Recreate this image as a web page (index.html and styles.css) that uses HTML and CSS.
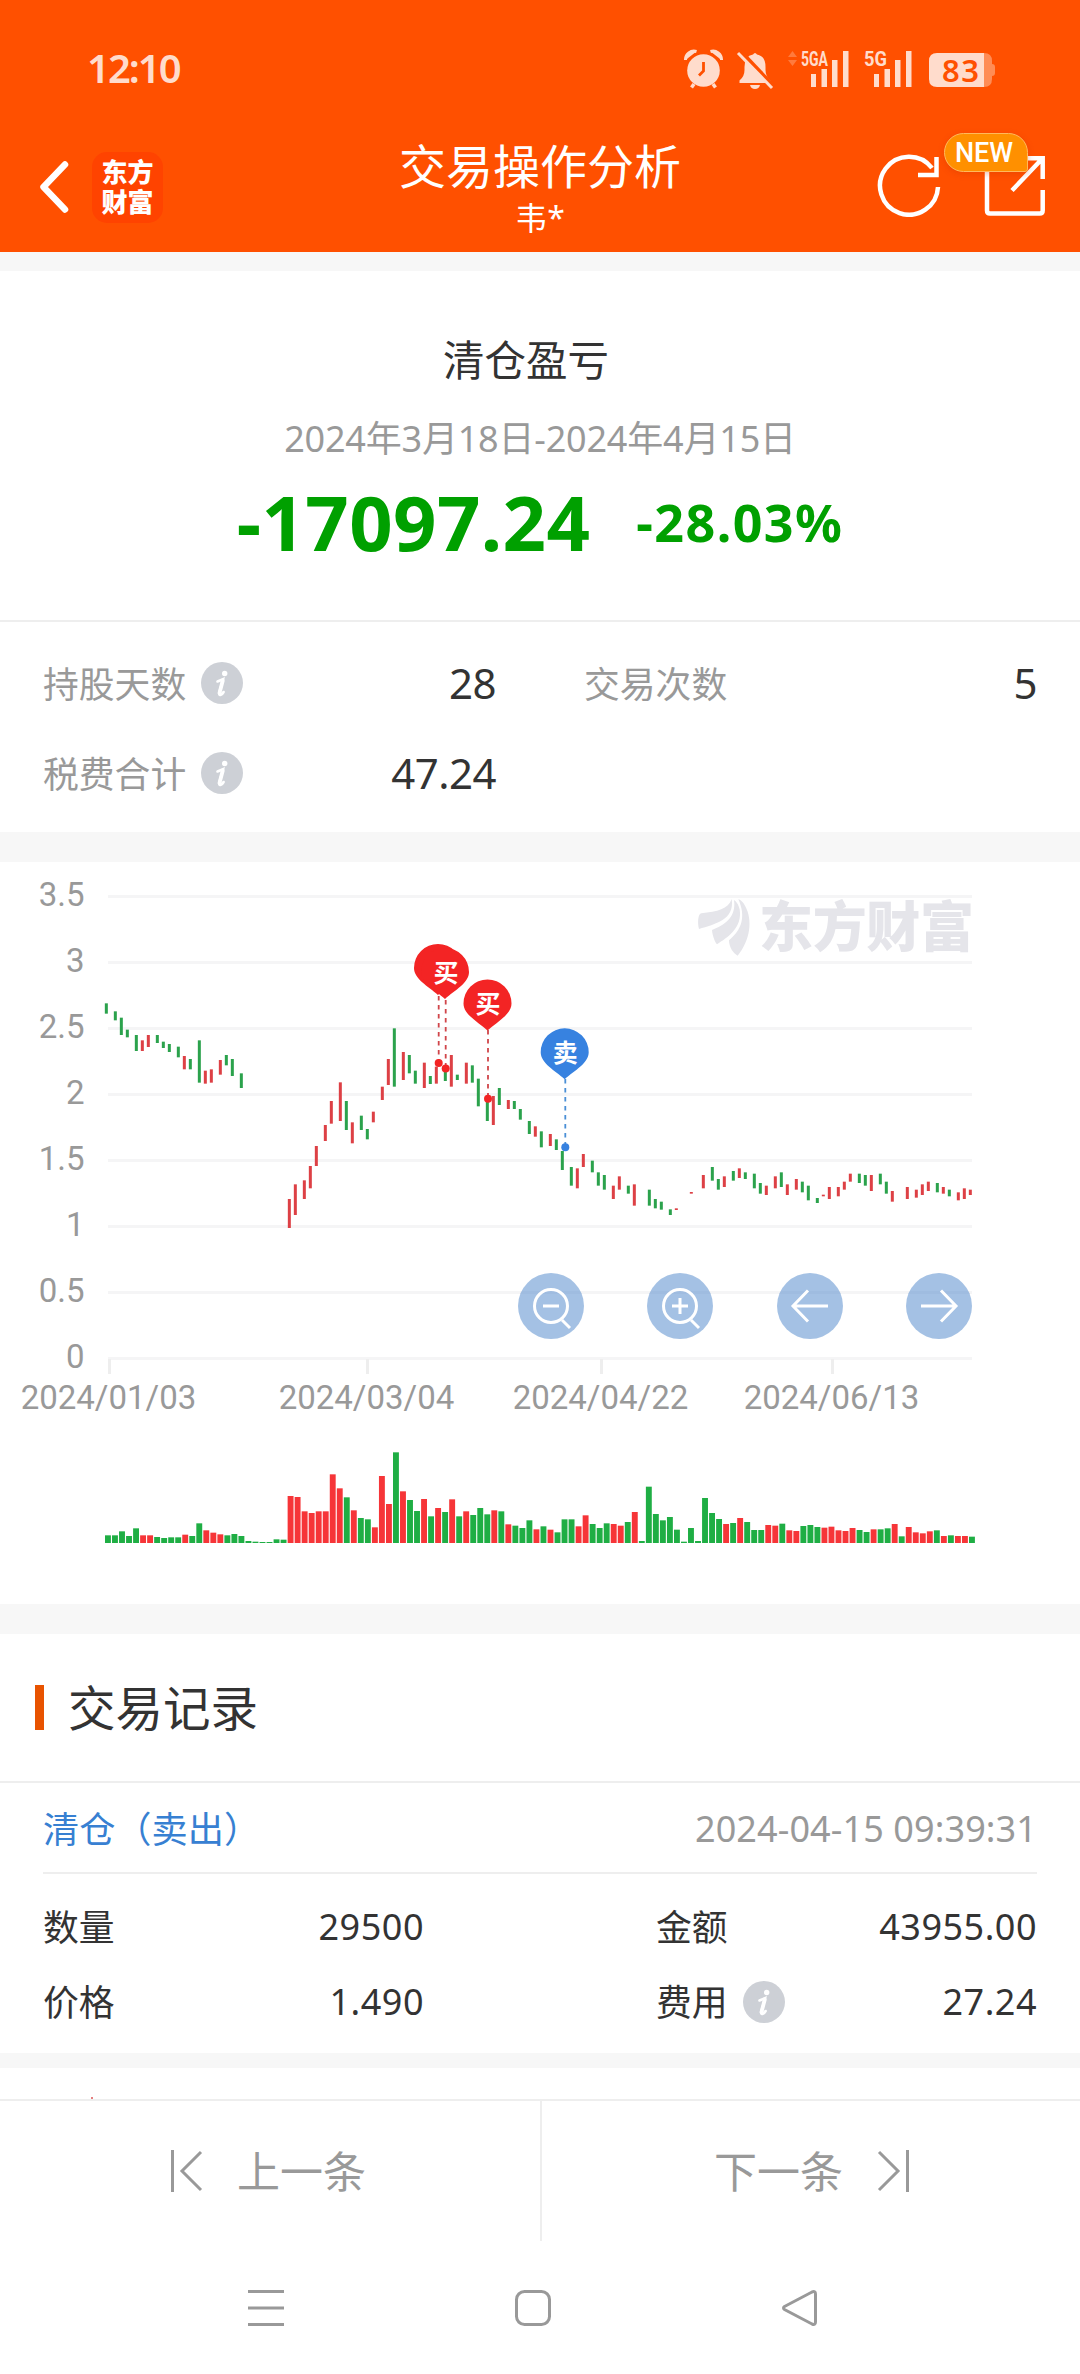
FILE: index.html
```html
<!DOCTYPE html>
<html lang="zh-CN">
<head>
  <meta charset="UTF-8" />
  <meta name="viewport" content="width=device-width, initial-scale=1.0"/>
  <title>交易操作分析</title>
  <link rel="stylesheet" href="styles.css">
</head>
<body>
  <!-- Shared icons -->
  <svg class="sprite" width="0" height="0">
    <symbol id="icon-info" viewBox="0 0 42 42">
      <circle cx="21" cy="21" r="21" fill="#cdd0d6"/>
      <circle cx="23.700" cy="11.500" r="2.700" fill="#fff"/>
      <path d="M16.500 19.500q2.500-1 5.500-2.200L18.300 30.500q-.6 3 1.500 2.200q1.700-.7 2.800-2.700" fill="none" stroke="#fff" stroke-width="2.600" stroke-linecap="round"/>
      <path d="M21.800 18.500L18.500 31" stroke="#fff" stroke-width="3.800" stroke-linecap="round"/>
    </symbol>
    <symbol id="pin" viewBox="-24 -24 48 52" overflow="visible">
      <path d="M-24 0A24 24 0 1 1 24 0C24 11 10 18 0 27C-10 18-24 11-24 0Z"/>
    </symbol>
  </svg>

  <header class="header">
    <div class="status-bar">
      <span class="time">12:10</span>
      <svg class="status-icons" width="312" height="46" viewBox="684 46 312 46" fill="#ffdccc">
        <!-- alarm -->
        <circle cx="703.5" cy="70.500" r="16.300"/>
        <path d="M685.500 60a8.500 8.500 0 0 1 11-8.500M721.500 60a8.500 8.500 0 0 0-11-8.500" stroke="#ffdccc" stroke-width="3"/>
        <path d="M694 84l-2.500 3.500M713 84l2.500 3.500" stroke="#ffdccc" stroke-width="3.500"/>
        <path d="M703.500 62v9l-4.500 4.500" fill="none" stroke="#ff5000" stroke-width="2.800"/>
        <!-- muted bell -->
        <path d="M739.500 83v-2.500q5-4 5-10.500v-3q0-11 8.500-12.500q2-3 4 0q8.500 1.500 8.500 12.500v3q0 6.500 5 10.500v2.500zM750 85h10q-1 4-5 4t-5-4z"/>
        <path d="M740 50.500l34 36" stroke="#ff5000" stroke-width="4"/>
        <path d="M738 53l34 35" stroke="#ffdccc" stroke-width="3"/>
        <path d="M788 57l4.500-6 4.500 6zM788 60l4.500 6 4.500-6z" fill="#ff7a3d"/>
        <text class="net" x="801" y="66" textLength="27" lengthAdjust="spacingAndGlyphs">5GA</text>
        <path d="M811 74h5v13h-5zM821.500 69h5.500v18h-5.500zM832 60h5.500v27H832zM843 51h5.500v36H843z"/>
        <text class="net" x="864" y="66" textLength="23" lengthAdjust="spacingAndGlyphs">5G</text>
        <path d="M874 74h5v13h-5zM884.500 69h5.500v18h-5.500zM895 60h5.500v27H895zM906 51h5.500v36H906z"/>
        <!-- battery -->
        <path d="M984 53q8 0 8 8v3q3 0 3 3v6q0 3-3 3v3q0 8-8 8z" fill="#ff8c55"/>
        <path d="M984 53v34h-47q-8 0-8-8V61q0-8 8-8z"/>
        <text class="battery" x="942" y="81.500" textLength="37">83</text>
      </svg>
    </div>

    <div class="nav-bar">
      <div class="nav-left">
        <svg width="30" height="54" viewBox="0 0 30 54"><path d="M26 4.500L4.500 27 26 49.500" fill="none" stroke="#fff" stroke-width="6.500" stroke-linecap="round" stroke-linejoin="round"/></svg>
        <div class="brand">东方<br>财富</div>
      </div>
      <div class="nav-title">
        <h1>交易操作分析</h1>
        <p>韦*</p>
      </div>
      <div class="nav-right">
        <svg width="64" height="64" viewBox="877 153 64 64" fill="none" stroke="#fff" stroke-width="4.500">
          <path d="M938 187A29 29 0 1 1 932 168"/>
          <path d="M936.500 157v18H918"/>
        </svg>
        <svg width="62" height="64" viewBox="984 153 62 64" fill="none" stroke="#fff" stroke-width="4.500">
          <path d="M1012 190.500L1041 160M1026 158.300h16.700V179M1042.700 190v20.500q0 3-3 3H990q-3 0-3-3V165"/>
        </svg>
        <span class="badge">NEW</span>
      </div>
    </div>
  </header>

  <section class="summary">
    <h2>清仓盈亏</h2>
    <p class="period">2024年3月18日-2024年4月15日</p>
    <div class="profit">
      <strong class="amount">-17097.24</strong>
      <strong class="percent">-28.03%</strong>
    </div>
  </section>

  <section class="stats">
    <div class="stat">
      <span>持股天数</span><svg class="info"><use href="#icon-info"/></svg><b>28</b>
    </div>
    <div class="stat"><span>交易次数</span><b>5</b></div>
    <div class="stat">
      <span>税费合计</span><svg class="info"><use href="#icon-info"/></svg><b>47.24</b>
    </div>
  </section>

  <section class="chart">
    <svg id="chart" width="1080" height="742" viewBox="0 862 1080 742">
      <g id="grid"></g>
      <!-- watermark -->
      <g class="watermark">
        <path transform="translate(680 860) scale(.3333)" d="M155 117C145 148 112 154 64 160C54 160 52 190 57 207C105 192 165 180 155 117ZM162 120C170 172 132 196 96 210C97 225 104 245 111 253C142 233 188 204 179 148Q174 128 162 120ZM175 117C198 170 186 208 147 241C147 262 160 280 173 287C211 240 219 180 195 137Q187 122 175 117Z"/>
        <text x="759" y="947" textLength="215">东方财富</text>
      </g>
      <g id="candles" transform="translate(0 860) scale(.33333)"></g>
      <g id="volume"></g>
      <!-- trade markers -->
      <g class="buy">
        <path d="M438.700 996v64M445.700 1000v66M488 1030v66"/>
        <circle cx="438.700" cy="1063" r="4"/>
        <circle cx="445.700" cy="1068.500" r="4"/>
        <circle cx="488" cy="1098.700" r="4"/>
        <use href="#pin" x="414" y="944" width="48" height="52"/>
        <use href="#pin" x="421" y="948" width="48" height="52"/>
        <use href="#pin" x="463.500" y="979.500" width="48" height="52"/>
        <text x="446" y="982">买</text>
        <text x="488" y="1012.500">买</text>
      </g>
      <g class="sell">
        <path d="M565.300 1079v66"/>
        <circle cx="565.300" cy="1147.300" r="4"/>
        <use href="#pin" x="540.700" y="1028.300" width="48" height="52"/>
        <text x="565.300" y="1061.500">卖</text>
      </g>
    </svg>
    <div class="chart-tools">
      <button><svg viewBox="-33 -33 66 66"><circle r="16.500"/><path d="M-8 0H8M11 14l8 8"/></svg></button>
      <button><svg viewBox="-33 -33 66 66"><circle r="16.500"/><path d="M-8 0H8M0-8V8M11 14l8 8"/></svg></button>
      <button><svg viewBox="-33 -33 66 66"><path d="M18 0H-17M-2-15.500L-17 0-2 15.500"/></svg></button>
      <button><svg viewBox="-33 -33 66 66"><path d="M-18 0H17M2-15.500L17 0 2 15.500"/></svg></button>
    </div>
  </section>

  <section class="records">
    <h2>交易记录</h2>
    <article class="record">
      <div class="record-head">
        <span class="record-type">清仓（卖出）</span>
        <time>2024-04-15 09:39:31</time>
      </div>
      <div class="record-body">
        <div class="cell"><span>数量</span><b>29500</b></div>
        <div class="cell"><span>金额</span><b>43955.00</b></div>
        <div class="cell"><span>价格</span><b>1.490</b></div>
        <div class="cell"><span>费用</span><svg class="info"><use href="#icon-info"/></svg><b>27.24</b></div>
      </div>
    </article>
    <article class="record-next"><i></i></article>
  </section>

  <footer class="pager">
    <a class="prev">
      <svg width="32" height="44" viewBox="0 0 32 44"><path d="M1.500 1v42M30 3L11 22l19 19"/></svg>
      <span>上一条</span>
    </a>
    <a class="next">
      <span>下一条</span>
      <svg width="32" height="44" viewBox="0 0 32 44"><path d="M30.500 1v42M2 3l19 19L2 41"/></svg>
    </a>
  </footer>

  <nav class="system-nav">
    <svg width="36" height="36" viewBox="0 0 36 36"><path d="M0 1.500h36M0 18h36M0 34.500h36"/></svg>
    <svg width="36" height="36" viewBox="0 0 36 36"><rect x="1.500" y="1.500" width="33" height="33" rx="8"/></svg>
    <svg width="36" height="36" viewBox="0 0 36 36"><path d="M2.500 16.500L30 2q3.500-1.500 3.500 2v28q0 3.500-3.500 2L2.500 19.500q-2-1.500 0-3z"/></svg>
  </nav>

  <script>
    // candle: colour, x, high, low (in device pixels, 3 per unit)
    const candles = `G319,430,461 G346,454,481 G364,473,525 G382,509,532 G409,525,573 R427,541,573
      R445,525,561 G472,525,549 G490,545,564 G508,552,576 G535,560,592 R553,588,628 G571,597,628
      G598,541,668 R616,632,671 R634,628,668 R661,600,644 G679,585,616 G697,597,648 G724,640,684
      R868,1017,1104 R886,973,1065 R913,961,1017 R931,918,985 R949,858,918 R976,795,843 R994,723,791
      R1021,667,783 G1039,723,810 R1057,787,850 G1084,767,810 G1102,807,838 R1120,755,787
      R1147,680,720 R1165,597,675 G1183,505,680 R1210,576,660 G1228,585,640 G1246,632,671
      R1273,608,684 G1291,648,672 R1309,620,671 G1336,625,663 R1354,585,680 G1372,644,660
      R1399,608,671 G1417,616,668 G1435,656,739 G1462,716,783 R1480,708,795 G1498,684,735
      R1525,720,747 G1543,723,747 G1561,747,779 G1588,783,822 R1606,799,830 G1624,814,862
      R1651,822,858 G1669,838,870 G1687,873,930 G1714,921,977 R1732,925,985 R1750,882,921
      G1777,902,937 G1795,937,977 G1813,945,989 R1840,977,1017 R1858,949,989 G1885,977,1001
      R1903,973,1037 G1948,989,1037 G1966,1017,1045 G1984,1025,1049 G2011,1048,1065 R2029,1045,1050
      R2074,996,1001 R2110,945,985 G2137,921,962 G2155,957,989 R2173,949,981 G2200,933,962
      R2218,925,954 G2236,937,957 G2263,941,985 G2281,969,1001 R2299,977,1005 R2326,949,985
      G2344,937,981 R2362,973,1005 R2389,957,989 G2407,965,997 G2425,977,1021 G2452,1014,1029
      R2470,1004,1009 R2488,981,1017 R2515,981,1009 R2533,965,989 R2551,941,965 G2578,941,969
      G2596,945,977 R2614,945,993 G2641,941,973 G2659,965,1001 R2677,993,1025 R2722,981,1017
      R2749,989,1013 R2767,973,1005 R2785,965,993 G2812,969,997 R2830,981,1001 G2848,989,1009
      R2875,997,1021 R2893,985,1017 R2911,989,1005`;

    // volume bars: colour + height, one per trading day
    const volume = `G23 G23 G35 G21 G44 R23 R23 G18 G15 G17 G17 R25 G21 G59 R38 R31 R26 G23 G27 G21
      G6 G4 G3 G3 G11 G10 R141 R138 R95 R90 R95 R95 R206 R164 G137 R98 G75 G71 R47 R201 R117 G272
      R155 G129 G96 R132 G80 R105 G93 R131 G80 R95 G84 G105 G86 R98 G95 R56 G52 G45 G68 R41 G50
      R40 G32 G71 G71 R50 R83 G57 G45 G59 R57 R52 G63 R93 G6 G169 G87 G68 G78 G40 G4 G45 G6 G135
      G90 G72 R57 G60 R75 G63 G39 G39 R54 R52 G58 R38 R36 G51 G54 G48 R46 R49 R38 R36 R45 G39 G33
      R41 G41 G44 R57 G20 R48 R32 R29 R35 G38 R21 G23 R21 R21 G19`;

    // Grid lines and price labels
    let grid = '';
    for (let i = 0; i <= 7; i++) {
      const y = 896.5 + i * 66;
      grid += `<rect x="108" y="${y - 1.5}" width="864" height="3" fill="#f5f5f6"/>`;
      grid += `<text x="84.5" y="${y + 9}" text-anchor="end">${3.5 - i * 0.5}</text>`;
    }

    // Date ticks
    [[109.5, '2024/01/03'], [367.5, '2024/03/04'], [601.5, '2024/04/22'], [832.5, '2024/06/13']].forEach(([x, label]) => {
      grid += `<rect x="${x - 1.5}" y="1359" width="3" height="15" fill="#eee"/>`;
      grid += `<text x="${x - 1}" y="1409" text-anchor="middle">${label}</text>`;
    });
    document.getElementById('grid').innerHTML = grid;

    document.getElementById('candles').innerHTML = candles.split(/\s+/).map(c => {
      const [x, top, bottom] = c.slice(1).split(',').map(Number);
      return `<rect class="${c[0] === 'R' ? 'up' : 'down'}" x="${x - 4.5}" y="${top}" width="9" height="${bottom - top}"/>`;
    }).join('');

    document.getElementById('volume').innerHTML = volume.split(/\s+/).map((v, i) => {
      const h = v.slice(1) / 3;
      return `<rect class="${v[0] === 'R' ? 'up' : 'down'}" x="${(105 + i * 864 / 123).toFixed(2)}" y="${(1543 - h).toFixed(2)}" width="5.9" height="${h.toFixed(2)}"/>`;
    }).join('');
  </script>
</body>
</html>
```
FILE: styles.css
```css
* {
  box-sizing: border-box;
  margin: 0;
  padding: 0;
}
body {
  width: 1080px;
  height: 2374px;
  overflow: hidden;
  display: flex;
  flex-direction: column;
  background: #fff;
  font-family: "Noto Sans", "Noto Sans CJK SC", sans-serif;
  font-size: 36px;
  color: #333;
}
svg {
  display: block;
  flex: none;
}
.sprite {
  position: absolute;
}
/* 
  Header 
*/
.header {
  height: 271px;
  background: #ff5000;
  border-bottom: 19px solid #f7f7f7;
  color: #fff;
}
.status-bar {
  display: flex;
  justify-content: space-between;
  align-items: center;
  height: 138px;
  padding: 0 84px 0 87px;
}
.time {
  padding-bottom: 4px;
  font-size: 40px;
  font-weight: 600;
  letter-spacing: -2px;
  color: #ffdccc;
}
.net {
  font: 700 21px Roboto, sans-serif;
}
.battery {
  font: 600 31px "Noto Sans", sans-serif;
  fill: #ff5000;
}
.nav-bar {
  display: grid;
  grid-template-columns: 1fr 1fr 1fr;
  height: 114px;
}
.nav-left {
  display: flex;
  align-items: center;
  gap: 23px;
  padding: 0 0 16px 39px;
}
.brand {
  width: 71px;
  height: 71px;
  padding-top: 4px;
  border-radius: 15px;
  background: #ff4300;
  font: 900 26px/30px "Noto Sans CJK SC", sans-serif;
  text-align: center;
}
.nav-title {
  text-align: center;
}
.nav-title h1 {
  margin: -1px -20px 1px;
  font-size: 47px;
  line-height: 58px;
  font-weight: 400;
}
.nav-title p {
  font-size: 32px;
  line-height: 44px;
}
.nav-right {
  position: relative;
  display: flex;
  justify-content: flex-end;
  gap: 43px;
  padding: 15px 34px 0 0;
}
.badge {
  position: absolute;
  top: -5px;
  right: 52px;
  width: 84px;
  height: 39px;
  padding-right: 4px;
  border: 1px solid #ffb95c;
  border-radius: 20px 20px 3px 20px;
  background: #ff9000;
  box-shadow: 0 2px 6px rgba(200, 50, 0, 0.3);
  font: 500 27px/38px Roboto, sans-serif;
  text-align: center;
}
/* 
  Profit summary 
*/
.summary {
  height: 351px;
  padding-top: 60px;
  border-bottom: 2px solid #eee;
  text-align: center;
}
.summary h2 {
  margin-right: 28px;
  font-size: 41.5px;
  line-height: 58px;
  font-weight: 400;
}
.period {
  margin-top: 22px;
  line-height: 56px;
  letter-spacing: -0.2px;
  color: #999;
}
.profit {
  display: flex;
  justify-content: center;
  align-items: center;
  gap: 46px;
  line-height: 110px;
  color: #00a000;
}
.amount {
  font-size: 76px;
  letter-spacing: 0.4px;
}
.percent {
  font-size: 52px;
  letter-spacing: 1.4px;
}
/* 
  Stats 
*/
.stats {
  display: grid;
  grid-template-columns: 453px 453px;
  grid-auto-rows: 90px;
  column-gap: 88px;
  height: 240px;
  padding: 16px 43px 0;
  border-bottom: 30px solid #f7f7f7;
}
.stat {
  display: flex;
  align-items: center;
  color: #999;
}
.stat span,
.cell span {
  padding-bottom: 3px;
  font-size: 35.8px;
}
.stat b {
  margin-left: auto;
  padding-bottom: 1px;
  font-size: 42px;
  font-weight: 400;
  letter-spacing: -0.5px;
  color: #333;
}
.info {
  width: 42px;
  height: 42px;
  margin-left: 15px;
}
/* 
  Chart 
*/
.chart {
  position: relative;
  height: 772px;
  border-bottom: 30px solid #f7f7f7;
}
#grid text {
  font: 33px Roboto, sans-serif;
  fill: #999;
}
.watermark {
  fill: #e5e5ea;
  font: 900 54px "Noto Sans CJK SC", sans-serif;
}
#candles .up {
  fill: #dd4045;
}
#candles .down {
  fill: #2ba24c;
}
#volume .up {
  fill: #f63538;
}
#volume .down {
  fill: #1fae44;
}
.buy {
  fill: #f32424;
}
.sell {
  fill: #3782e0;
}
.buy > path,
.sell > path {
  stroke: #d0454a;
  stroke-width: 1.8;
  stroke-dasharray: 4.5;
}
.sell > path {
  stroke: #4a8fd6;
}
.buy text,
.sell text {
  font: 700 25px "Noto Sans CJK SC", sans-serif;
  text-anchor: middle;
  fill: #fff;
}
.chart-tools {
  position: absolute;
  top: 411px;
  left: 518px;
  width: 454px;
  display: flex;
  justify-content: space-between;
}
.chart-tools button {
  width: 66px;
  height: 66px;
  border: none;
  border-radius: 50%;
  background: rgba(73, 131, 201, 0.5);
}
.chart-tools svg {
  fill: none;
  stroke: #fff;
  stroke-width: 3;
}
/* 
  Trade records 
*/
.records h2 {
  display: flex;
  align-items: center;
  height: 149px;
  border-bottom: 2px solid #eee;
  padding: 0 35px;
  font-size: 47.5px;
  line-height: 60px;
  font-weight: 400;
}
.records h2::before {
  content: "";
  width: 9px;
  height: 45px;
  margin-right: 24px;
  background: #e85300;
}
.record {
  height: 285px;
  padding: 0 43px;
  border-bottom: 15px solid #f7f7f7;
}
.record-head {
  display: flex;
  justify-content: space-between;
  align-items: center;
  height: 91px;
  border-bottom: 2px solid #eee;
}
.record-type {
  font-size: 36.2px;
  color: #3780d2;
}
.record-head time {
  padding-top: 2px;
  letter-spacing: 0.1px;
  color: #999;
}
.record-body {
  display: grid;
  grid-template-columns: 381px 381px;
  grid-auto-rows: 75px;
  justify-content: space-between;
  padding-top: 15px;
}
.cell {
  display: flex;
  align-items: center;
}
.cell b {
  margin-left: auto;
  padding-bottom: 1px;
  font-weight: 400;
  letter-spacing: 0.5px;
}
.record-next {
  height: 31px;
  padding: 29px 0 0 91px;
}
.record-next i {
  display: block;
  width: 2px;
  height: 2px;
  background: #e58080;
}
/* 
  Bottom bars 
*/
.pager {
  display: grid;
  grid-template-columns: 542px 538px;
  height: 142px;
  border-top: 2px solid #eee;
  font-size: 43px;
  color: #999;
}
.pager a {
  display: flex;
  align-items: center;
  gap: 34px;
}
.pager span {
  padding-bottom: 3px;
}
.prev {
  padding-left: 171px;
  border-right: 2px solid #eee;
}
.next {
  padding-left: 172px;
}
.pager svg,
.system-nav svg {
  fill: none;
  stroke: #999;
  stroke-width: 3;
}
.system-nav {
  display: flex;
  justify-content: space-between;
  padding: 49px 262px 0 248px;
}
```
